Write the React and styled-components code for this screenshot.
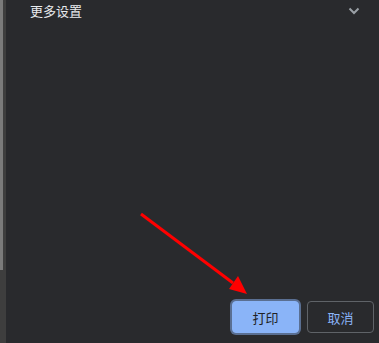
import React from 'react';
import styled, { createGlobalStyle } from 'styled-components';

const GlobalStyle = createGlobalStyle`
  html, body {
    margin: 0;
    padding: 0;
    background: #292a2d;
  }
  body {
    font-family: "Noto Sans CJK SC", "Noto Sans", sans-serif;
  }
`;

const Page = styled.div`
  position: relative;
  display: flex;
  width: 379px;
  height: 343px;
  background: #292a2d;
  overflow: hidden;
`;

const ScrollTrack = styled.div`
  display: flex;
  flex-direction: column;
  width: 6px;
  flex-shrink: 0;
  background: #3e3e3e;
`;

const ScrollThumb = styled.div`
  width: 3px;
  height: 270px;
  background: #7b7b7b;
`;

const Panel = styled.div`
  flex: 1;
  display: flex;
  flex-direction: column;
`;

const SectionRow = styled.div`
  display: flex;
  align-items: center;
  justify-content: space-between;
  height: 22px;
  padding: 0 19px 0 24px;
`;

const SectionTitle = styled.span`
  font-size: 13px;
  line-height: 22px;
  color: #e8eaed;
`;

const Filler = styled.div`
  flex: 1;
`;

const Footer = styled.div`
  display: flex;
  justify-content: flex-end;
  gap: 8px;
  padding: 0 5px 10px 0;
`;

const Button = styled.button`
  width: 67px;
  height: 32px;
  border-radius: 4px;
  font-family: "Noto Sans CJK SC", "Noto Sans", sans-serif;
  font-size: 13px;
  cursor: pointer;
  border: 1px solid ${({ $primary }) => ($primary ? '#8ab4f8' : '#5f6368')};
  background: ${({ $primary }) => ($primary ? '#8ab4f8' : 'transparent')};
  color: ${({ $primary }) => ($primary ? '#202124' : '#8ab4f8')};
  box-shadow: ${({ $primary }) => ($primary ? '0 0 0 2px #5a6f92' : 'none')};
`;

const Annotation = styled.svg`
  position: absolute;
  left: 0;
  top: 0;
  pointer-events: none;
`;

const Chevron = () => (
  <svg width="12" height="8" viewBox="0 0 12 8">
    <polyline
      points="1.5,1.5 6,6 10.5,1.5"
      fill="none"
      stroke="#9aa0a6"
      strokeWidth="2"
    />
  </svg>
);

const App = () => {
  return (
    <>
      <GlobalStyle />
      <Page>
        <ScrollTrack>
          <ScrollThumb />
        </ScrollTrack>
        <Panel>
          <SectionRow>
            <SectionTitle>更多设置</SectionTitle>
            <Chevron />
          </SectionRow>
          <Filler />
          <Footer>
            <Button $primary>打印</Button>
            <Button>取消</Button>
          </Footer>
        </Panel>
        {/* 红色箭头标注 */}
        <Annotation width="379" height="343" viewBox="0 0 379 343">
          <line x1="141" y1="214" x2="233" y2="283" stroke="#ff0000" strokeWidth="3" />
          <polygon points="247,294 229,289 238,276" fill="#ff0000" />
        </Annotation>
      </Page>
    </>
  );
};

export default App;
